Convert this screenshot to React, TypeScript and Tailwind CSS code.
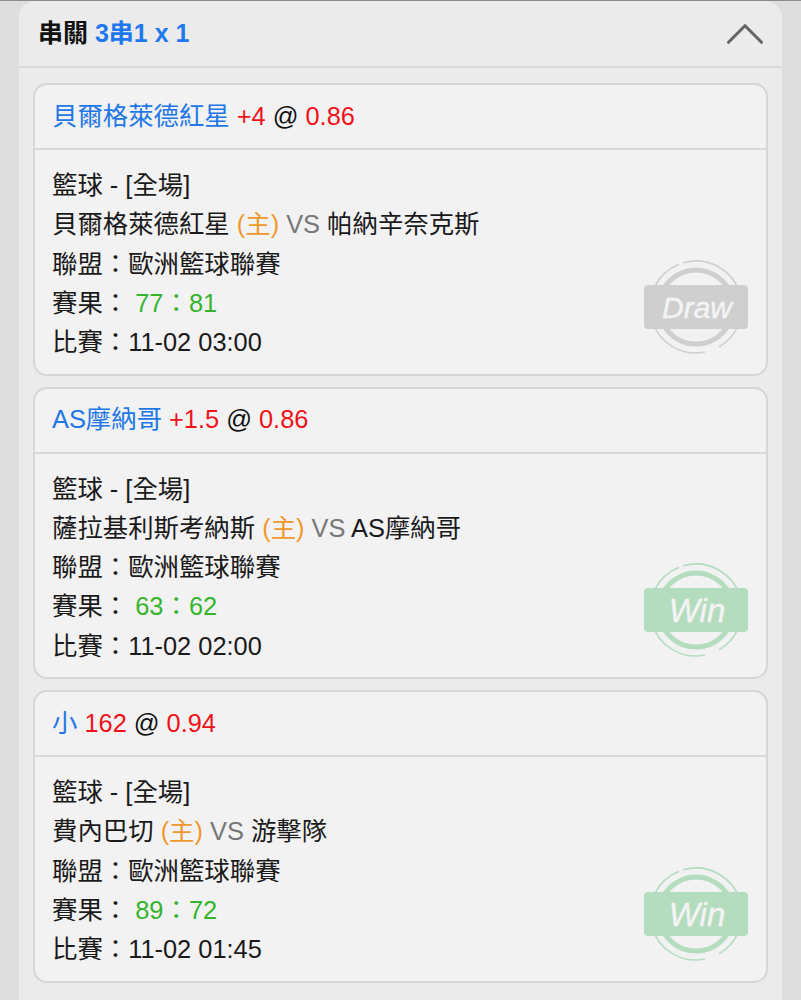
import React from 'react';
import { ChevronUp } from 'lucide-react';

interface Leg {
  pick: string;
  line: string;
  odds: string;
  home: string;
  away: string;
  score: [number, number];
  time: string;
  result: 'Draw' | 'Win';
}

const legs: Leg[] = [
  { pick: '貝爾格萊德紅星', line: '+4', odds: '0.86', home: '貝爾格萊德紅星', away: '帕納辛奈克斯', score: [77, 81], time: '11-02 03:00', result: 'Draw' },
  { pick: 'AS摩納哥', line: '+1.5', odds: '0.86', home: '薩拉基利斯考納斯', away: 'AS摩納哥', score: [63, 62], time: '11-02 02:00', result: 'Win' },
  { pick: '小', line: '162', odds: '0.94', home: '費內巴切', away: '游擊隊', score: [89, 72], time: '11-02 01:45', result: 'Win' },
];

// 印章：雙層圓環加一條橫幅
const Stamp = ({ result }: { result: Leg['result'] }) => {
  const isWin = result === 'Win';
  const color = isWin ? '#b4dcbf' : '#cfcfcf';
  return (
    <svg width="106" height="96" viewBox="0 0 106 96" className="absolute right-[17px] bottom-[18px]">
      <circle cx="53" cy="47" r="37" fill="none" stroke={color} strokeWidth="5" />
      <circle cx="53" cy="47" r="46" fill="none" stroke={color} strokeWidth="1.6" strokeDasharray="133 15 136 5" transform="rotate(-106 53 47)" />
      <rect x="1" y="25" width="104" height="44" rx="4" fill={color} />
      <text x="54" y={isWin ? 59 : 58} textAnchor="middle" fill="#f4f4f4" stroke="#f4f4f4" strokeWidth="0.4" fontSize={isWin ? 33 : 30} fontStyle="italic" fontFamily="'Liberation Sans', sans-serif">
        {result}
      </text>
    </svg>
  );
};

const LegCard = ({ leg }: { leg: Leg }) => (
  <div className="relative rounded-[14px] border-2 border-[#d6d6d6] bg-[#f2f2f2]">
    <div className="flex h-[65px] items-center border-b-2 border-[#d9d9d9] pl-[17px] leading-none text-[#111]">
      <span className="text-[#2277e8]">{leg.pick}</span>
      <span className="ml-[7px] text-[#f0121b]">{leg.line}</span>
      <span className="ml-[7px]">@</span>
      <span className="ml-[7px] text-[#f0121b]">{leg.odds}</span>
    </div>
    <div className="flex flex-col pl-[17px] pt-[16px] pb-[11.25px] leading-[39.25px] text-[#1a1a1a]">
      <div>籃球 - [全場]</div>
      <div>
        {leg.home} <span className="text-[#f0982c]">(主)</span> <span className="text-[#777]">VS</span> {leg.away}
      </div>
      <div>聯盟：歐洲籃球聯賽</div>
      <div>
        賽果： <span className="text-[#35b52e]">{leg.score[0]}：{leg.score[1]}</span>
      </div>
      <div>比賽：{leg.time}</div>
    </div>
    <Stamp result={leg.result} />
  </div>
);

export default function App() {
  return (
    <div className="h-[1000px] overflow-hidden border-t border-[#8c8c8c] bg-[#dedede] font-['Liberation_Sans','Noto_Sans_CJK_TC',sans-serif] text-[25.4px]">
      <div className="mx-[19px] w-[763px] rounded-t-[16px] bg-[#ebebeb]">
        <div className="flex h-[67px] items-center justify-between border-b-2 border-[#d8d8d8] pl-[19px] pr-[4px] text-[25px] font-bold leading-none">
          <div className="text-[#111]">
            串關 <span className="text-[#1f78ee]">3串1 x 1</span>
          </div>
          <ChevronUp size={66} strokeWidth={1.15} className="text-[#666]" />
        </div>
        <div className="flex flex-col gap-[11px] px-[14px] pt-[15px] pb-[20px]">
          {legs.map((leg) => (
            <LegCard key={leg.away} leg={leg} />
          ))}
        </div>
      </div>
    </div>
  );
}
